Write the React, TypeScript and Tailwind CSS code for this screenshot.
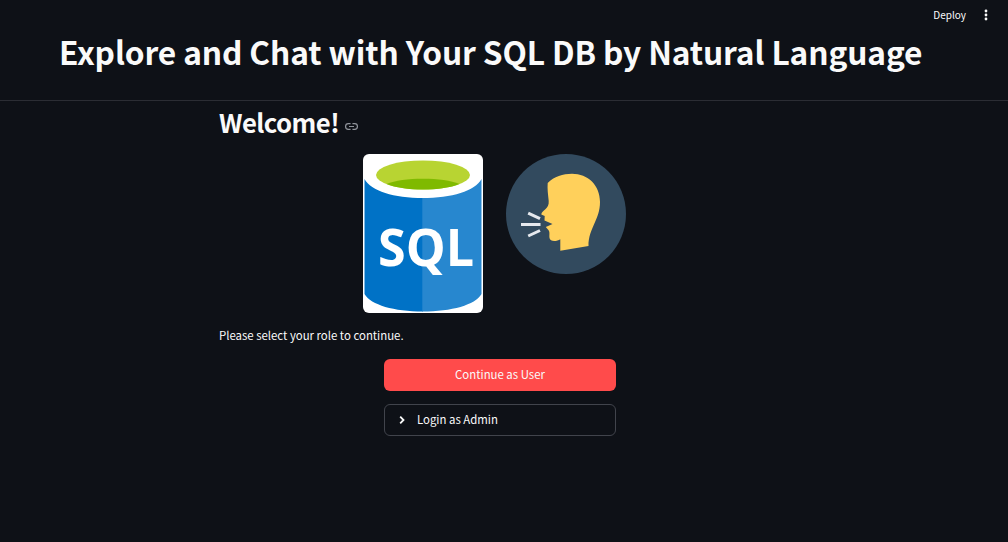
import React from "react";

function SqlImage() {
  return (
    <svg width="120" height="159" viewBox="0 0 120 159" className="block rounded-md" role="img" aria-label="Database">
      <rect width="120" height="159" fill="#ffffff" />
      <path d="M1.500 25C8 37 31 44 60 44V157.500C31 157.500 8 151 1.500 140Z" fill="#0072c6" />
      <path d="M118.500 25C112 37 89 44 59.300 44V157.500C89 157.500 112 151 118.500 140Z" fill="#2787cf" />
      <ellipse cx="60" cy="21" rx="47" ry="14.500" fill="#b8d432" />
      <path d="M23.500 30C32 26.500 45 24.700 60 24.700S88 26.500 96.500 30C88 33.600 75 35.500 60 35.500S32 33.600 23.500 30Z" fill="#7fba00" />
      <text x="15" y="112" textLength="96" lengthAdjust="spacingAndGlyphs" fill="#ffffff" className="font-['Open_Sans',sans-serif] text-[52px] font-bold">SQL</text>
    </svg>
  );
}

function SpeakerImage() {
  return (
    <svg width="120" height="120" viewBox="0 0 120 120" className="block" role="img" aria-label="Speaking head">
      <circle cx="60" cy="60" r="60" fill="#324a5e" />
      <path d="M41.700 29C48 22.500 57 19.700 66 19.700C82 19.700 94 31 94 48C94 66 82.500 74 82.500 92L54.300 96.700V85.200C51 87.500 44 88 43.500 84C43 80 44.500 77.500 41.500 75L39.800 73L46.500 70L38.500 66.500L38.700 62L35.300 60.500C35.500 56.500 43.500 55 42.700 47C42 40 41.200 35 41.700 29Z" fill="#ffd05b" />
      <path d="M22.200 59.200L34 64.700M15 70.500H34.500M22.200 82L34 76.500" stroke="#e6e9ee" strokeWidth="3" />
    </svg>
  );
}

function LinkIcon() {
  return (
    <svg width="15" height="15" viewBox="0 0 24 24" fill="none" stroke="#90949b" strokeWidth="1.900" className="mt-[8px] ml-[5px]">
      <path d="M10.500 7.500H7a4.500 4.500 0 0 0 0 9h3.500M13.500 7.500H17a4.500 4.500 0 0 1 0 9h-3.500M8 12h8" />
    </svg>
  );
}

export default function App() {
  return (
    <div className="flex h-[542px] w-full flex-col overflow-hidden bg-[#0e1117] font-['Noto_Sans_CJK_SC',sans-serif] text-[#fafafa]">
      <header className="flex h-[30px] shrink-0 items-center justify-end pr-[18px]">
        <button className="pb-[2px] text-[10px] leading-[15px]">Deploy</button>
        <svg width="8" height="14" viewBox="0 0 8 14" fill="currentColor" className="ml-[16px]">
          <circle cx="4" cy="3" r="1.400" /><circle cx="4" cy="7" r="1.400" /><circle cx="4" cy="11" r="1.400" />
        </svg>
      </header>
      <h1 className="h-[70px] shrink-0 pl-[59px] text-[31.700px] leading-[43px] font-bold tracking-[-0.115px] whitespace-nowrap">
        Explore and Chat with Your SQL DB by Natural Language
      </h1>
      <hr className="h-px shrink-0 border-0 bg-[#2b2d34]" />
      <main className="ml-[219px] flex w-[562px] flex-col">
        <div className="flex h-[53px] items-start">
          <h2 className="flex h-[42px] items-center text-[25.700px] leading-[42px] font-bold tracking-[-0.550px]">
            Welcome!
            <LinkIcon />
          </h2>
        </div>
        <div className="flex items-start gap-[23px] pl-[144px]">
          <SqlImage />
          <SpeakerImage />
        </div>
        <p className="mt-[12px] text-[11.400px] leading-5">Please select your role to continue.</p>
        <div className="mt-[14px] ml-[165px] flex w-[232px] flex-col gap-[13px]">
          <button className="h-8 rounded-md bg-[#ff4b4b] pb-[2px] text-[11.400px] leading-5">Continue as User</button>
          <button className="flex h-8 items-center rounded-md border border-[#41444c] pl-[13px] text-[11.400px] leading-5">
            <svg width="9" height="10" viewBox="0 0 9 10" fill="none" stroke="currentColor" strokeWidth="1.800" className="mr-[10px]">
              <path d="M2.200 1.700L5.500 5L2.200 8.300" />
            </svg>
            <span className="pb-[2px]">Login as Admin</span>
          </button>
        </div>
      </main>
    </div>
  );
}
